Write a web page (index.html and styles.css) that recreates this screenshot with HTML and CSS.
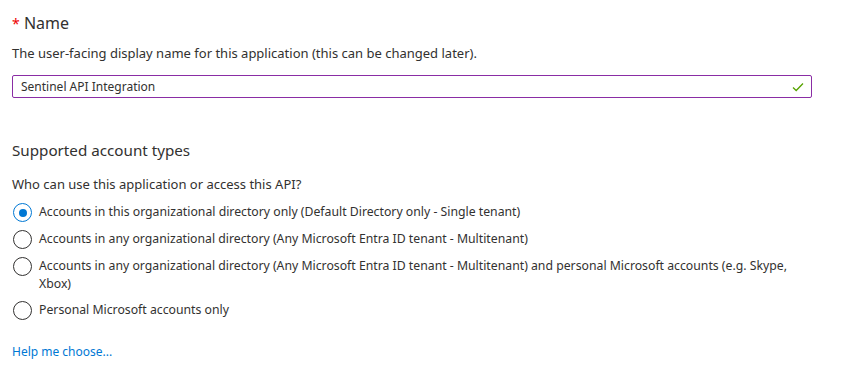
FILE: index.html
```html
<!DOCTYPE html>
<html lang="en">
<head>
  <meta charset="UTF-8">
  <title>Register an application</title>
  <link rel="stylesheet" href="styles.css">
</head>
<body>

<div class="form">
  <h2 class="field-title"><span class="required">*</span> Name</h2>
  <p class="hint">The user-facing display name for this application (this can be changed later).</p>
  <div class="textbox">
    <span class="textbox-value">Sentinel API Integration</span>
    <svg class="check" width="12" height="10" viewBox="0 0 12 10">
      <path d="M1 5.5 L4.2 8.5 L11 1.5" fill="none" stroke="#57a300" stroke-width="1.3"/>
    </svg>
  </div>

  <h3 class="section-title">Supported account types</h3>
  <p class="question">Who can use this application or access this API?</p>

  <div class="choices">
    <label class="choice">
      <span class="radio checked"></span>
      <span class="choice-text">Accounts in this organizational directory only (Default Directory only - Single tenant)</span>
    </label>
    <label class="choice">
      <span class="radio"></span>
      <span class="choice-text">Accounts in any organizational directory (Any Microsoft Entra ID tenant - Multitenant)</span>
    </label>
    <label class="choice">
      <span class="radio"></span>
      <span class="choice-text">Accounts in any organizational directory (Any Microsoft Entra ID tenant - Multitenant) and personal Microsoft accounts (e.g. Skype, Xbox)</span>
    </label>
    <label class="choice">
      <span class="radio"></span>
      <span class="choice-text">Personal Microsoft accounts only</span>
    </label>
  </div>

  <a class="help" href="#">Help me choose...</a>
</div>

</body>
</html>
```

FILE: styles.css
```css
body {
  margin: 0;
  font-family: "Noto Sans", "Open Sans", sans-serif;
  color: #323130;
  background: #fff;
}
.form {
  padding: 12px 12px 0 12px;
  width: 800px;
}
.field-title {
  font-size: 16px;
  font-weight: 400;
  margin: 0;
  line-height: 22px;
}
.required {
  color: #e00;
  font-size: 14px;
}
.hint, .question {
  font-size: 13px;
  margin: 0;
  line-height: 18px;
}
.hint {
  margin-top: 9px;
}
.textbox {
  margin-top: 13px;
  height: 23px;
  border: 1px solid #8a2da5;
  border-radius: 2px;
  display: flex;
  align-items: center;
  justify-content: space-between;
  padding: 0 7px 0 8px;
  font-size: 12px;
  box-sizing: border-box;
}
.section-title {
  font-size: 15.2px;
  font-weight: 400;
  margin: 42px 0 0 0;
  line-height: 20px;
}
.question {
  margin-top: 15px;
}
.choices {
  margin-top: 10px;
  display: flex;
  flex-direction: column;
  gap: 8px;
}
.choice {
  display: flex;
  align-items: flex-start;
  font-size: 12.25px;
  line-height: 18px;
}
.radio {
  flex: none;
  width: 17px;
  height: 17px;
  border: 1px solid #323130;
  border-radius: 50%;
  margin: 0 7px 0 1px;
  position: relative;
}
.radio.checked {
  border-color: #0078d4;
}
.radio.checked::after {
  content: "";
  position: absolute;
  left: 4.5px;
  top: 4.5px;
  width: 8px;
  height: 8px;
  border-radius: 50%;
  background: #0078d4;
}
.choice-text {
  max-width: 760px;
}
.help {
  display: inline-block;
  margin-top: 23px;
  font-size: 12px;
  color: #0078d4;
  text-decoration: none;
}
```
